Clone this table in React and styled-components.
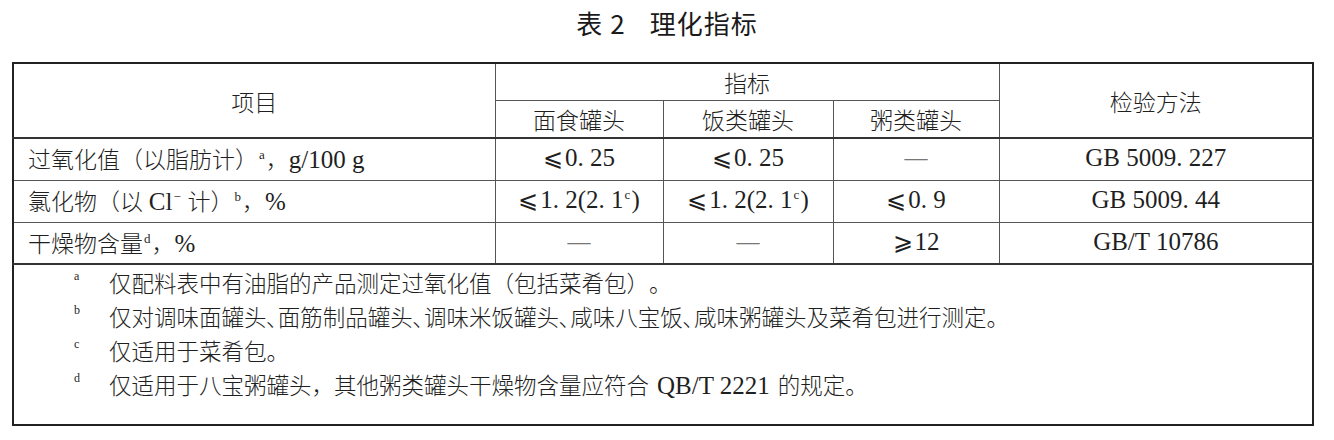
import { createGlobalStyle, styled } from "styled-components";

const Global = createGlobalStyle`
  html, body {
    margin: 0;
    padding: 0;
    background: #ffffff;
  }
  body {
    font-family: "Liberation Serif", "Noto Sans CJK SC", "DejaVu Sans", serif;
    color: #1f1f1f;
  }
`;

const Page = styled.div`
  width: 1334px;
  height: 440px;
  padding-top: 8px;
  box-sizing: border-box;
`;

const Title = styled.h2`
  margin: 0;
  height: 30px;
  line-height: 30px;
  text-align: center;
  font-family: "Noto Sans CJK SC", sans-serif;
  font-weight: 400;
  font-size: 26px;
  letter-spacing: 1px;
  color: #1a1a1a;

  span {
    margin-right: 24px;
  }
`;

const Table = styled.table`
  margin: 24px 0 0 12px;
  width: 1302px;
  border-collapse: collapse;
  table-layout: fixed;
  border: 2px solid #222;
  font-size: 23px;
  font-weight: 300;
`;

const HeadCell = styled.th`
  font-weight: 300;
  height: ${(p) => p.$h || 35}px;
  padding: 0;
  border-left: 1px solid #555;
  border-right: 1px solid #555;
  border-top: 1px solid #555;
  border-bottom: ${(p) => (p.$last ? "2px solid #333" : "1px solid #555")};
  text-align: center;
  vertical-align: middle;
`;

const Row = styled.tr`
  height: 42px;
`;

const Cell = styled.td`
  padding: 0 ${(p) => (p.$left ? "14px" : "0")} 2px;
  border: 1px solid #555;
  text-align: ${(p) => (p.$left ? "left" : "center")};
  vertical-align: middle;
  white-space: nowrap;
  font-size: ${(p) => (p.$num ? "25px" : "23px")};
  color: ${(p) => (p.$dash ? "#777" : "inherit")};
`;

const Lat = styled.span`
  font-size: 25px;
  margin: 0 ${(p) => p.$gap || 0}px;
`;

const Le = styled.span`
  font-family: "DejaVu Sans", sans-serif;
  font-size: 24px;
  margin-right: 2px;
`;

const Sup = styled.sup`
  font-size: 13px;
  vertical-align: 9px;
  line-height: 0;
  margin: 0 1px;
`;

const NoteCell = styled.td`
  padding: 0 0 23px 0;
  border-top: 2px solid #333;
`;

const Note = styled.div`
  display: flex;
  align-items: center;
  height: 34px;
`;

const NoteMark = styled.span`
  width: 95px;
  padding-left: 60px;
  box-sizing: border-box;
  font-size: 12px;
  align-self: flex-start;
  padding-top: 4px;
`;

const NoteText = styled.span`
  font-size: 22.5px;
  text-spacing-trim: space-all;
`;

export default function App() {
  return (
    <>
      <Global />
      <Page>
        <Title>
          <span>表 2</span>理化指标
        </Title>
        <Table>
          <colgroup>
            <col style={{ width: 482 }} />
            <col style={{ width: 168 }} />
            <col style={{ width: 170 }} />
            <col style={{ width: 166 }} />
            <col />
          </colgroup>
          <thead>
            <tr>
              <HeadCell rowSpan={2} $h={72} $last>
                项目
              </HeadCell>
              <HeadCell colSpan={3} $h={36}>
                指标
              </HeadCell>
              <HeadCell rowSpan={2} $h={72} $last>
                检验方法
              </HeadCell>
            </tr>
            <tr>
              <HeadCell $h={36} $last>面食罐头</HeadCell>
              <HeadCell $h={36} $last>饭类罐头</HeadCell>
              <HeadCell $h={36} $last>粥类罐头</HeadCell>
            </tr>
          </thead>
          <tbody>
            <Row>
              <Cell $left>
                过氧化值（以脂肪计）<Sup>a</Sup>，<Lat>g/100 g</Lat>
              </Cell>
              <Cell $num><Le>⩽</Le>0. 25</Cell>
              <Cell $num><Le>⩽</Le>0. 25</Cell>
              <Cell $dash>—</Cell>
              <Cell $num>GB 5009. 227</Cell>
            </Row>
            <Row>
              <Cell $left>
                氯化物（以 <Lat>Cl</Lat><Sup>−</Sup> 计）<Sup>b</Sup>，<Lat>%</Lat>
              </Cell>
              <Cell $num>
                <Le>⩽</Le>1. 2(2. 1<Sup>c</Sup>)
              </Cell>
              <Cell $num>
                <Le>⩽</Le>1. 2(2. 1<Sup>c</Sup>)
              </Cell>
              <Cell $num><Le>⩽</Le>0. 9</Cell>
              <Cell $num>GB 5009. 44</Cell>
            </Row>
            <Row>
              <Cell $left>
                干燥物含量<Sup>d</Sup>，<Lat>%</Lat>
              </Cell>
              <Cell $dash>—</Cell>
              <Cell $dash>—</Cell>
              <Cell $num><Le>⩾</Le>12</Cell>
              <Cell $num>GB/T 10786</Cell>
            </Row>
            <tr>
              <NoteCell colSpan={5}>
                <Note>
                  <NoteMark>a</NoteMark>
                  <NoteText>仅配料表中有油脂的产品测定过氧化值（包括菜肴包）。</NoteText>
                </Note>
                <Note>
                  <NoteMark>b</NoteMark>
                  <NoteText>
                    仅对调味面罐头､面筋制品罐头､调味米饭罐头､咸味八宝饭､咸味粥罐头及菜肴包进行测定。
                  </NoteText>
                </Note>
                <Note>
                  <NoteMark>c</NoteMark>
                  <NoteText>仅适用于菜肴包。</NoteText>
                </Note>
                <Note>
                  <NoteMark>d</NoteMark>
                  <NoteText>
                    仅适用于八宝粥罐头，其他粥类罐头干燥物含量应符合<Lat $gap={8}>QB/T 2221</Lat>的规定。
                  </NoteText>
                </Note>
              </NoteCell>
            </tr>
          </tbody>
        </Table>
      </Page>
    </>
  );
}
